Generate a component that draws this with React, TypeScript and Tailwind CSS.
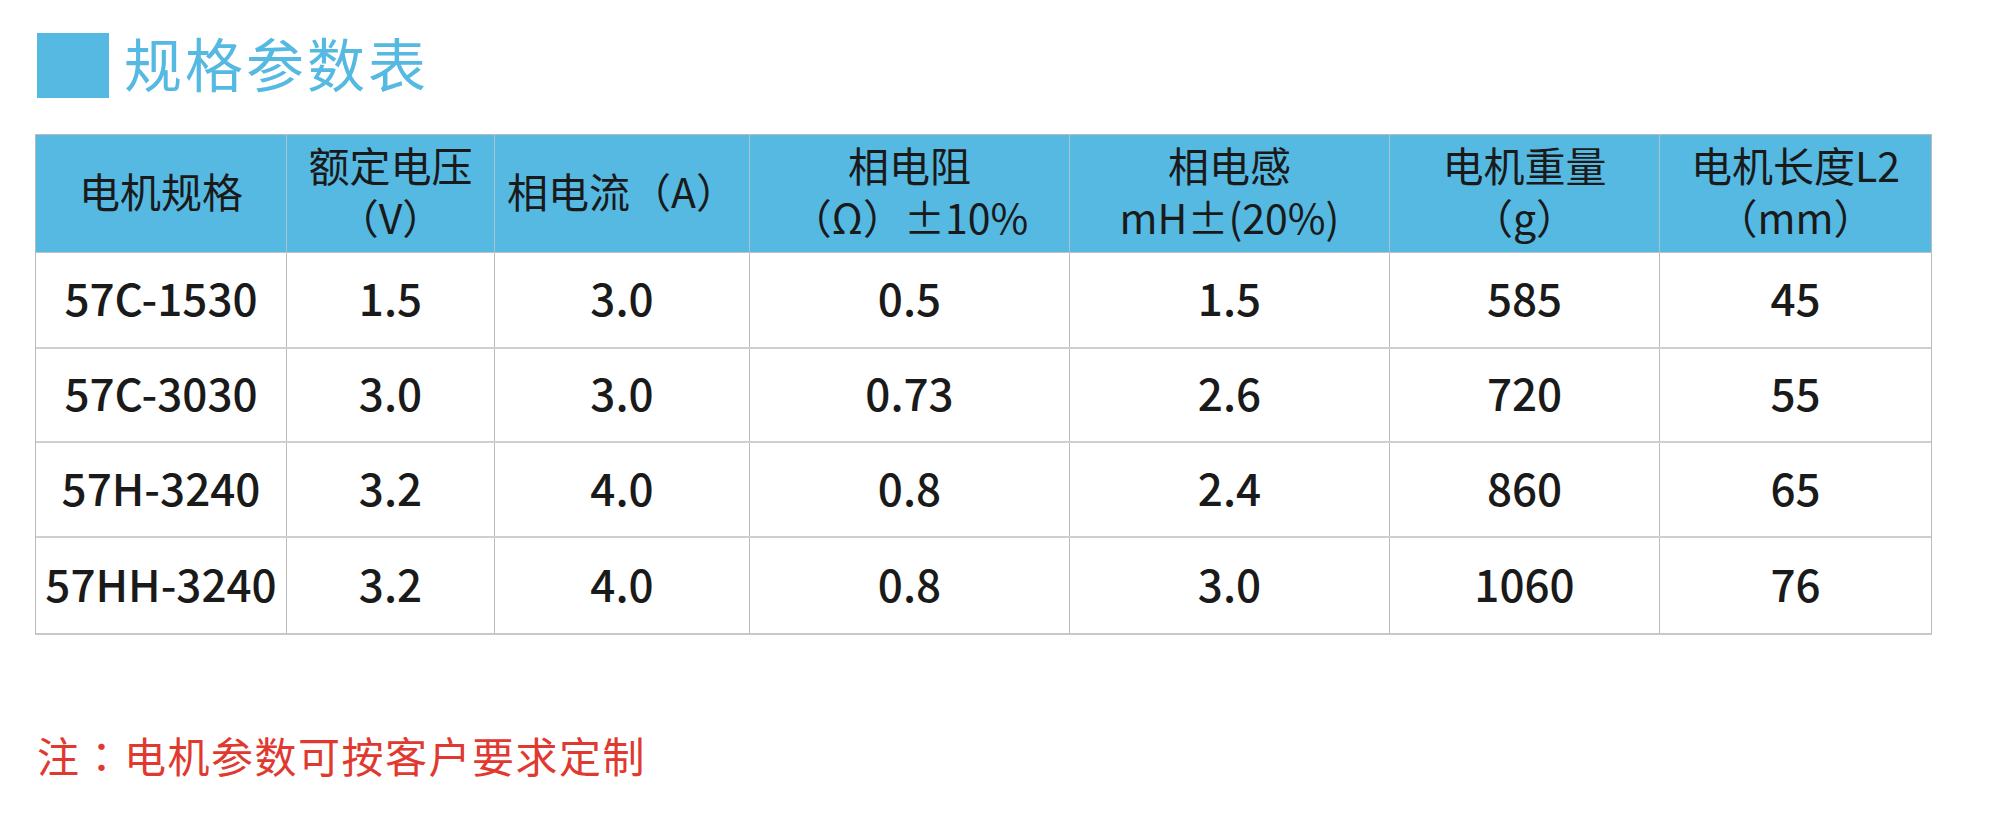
import React from "react";

const headers: string[][] = [
  ["电机规格"],
  ["额定电压", "（V）"],
  ["相电流（A）"],
  ["相电阻", "（Ω）±10%"],
  ["相电感", "mH±(20%)"],
  ["电机重量", "（g）"],
  ["电机长度L2", "（mm）"],
];

const rows: string[][] = [
  ["57C-1530", "1.5", "3.0", "0.5", "1.5", "585", "45"],
  ["57C-3030", "3.0", "3.0", "0.73", "2.6", "720", "55"],
  ["57H-3240", "3.2", "4.0", "0.8", "2.4", "860", "65"],
  ["57HH-3240", "3.2", "4.0", "0.8", "3.0", "1060", "76"],
];

const rowHeights = ["h-[96px]", "h-[94px]", "h-[95px]", "h-[95px]"];

export default function App() {
  return (
    <div className="w-[2000px] h-[820px] bg-white font-['Noto_Sans_CJK_SC','Noto_Sans',sans-serif] text-[#1a1a1a] overflow-hidden">
      <div className="pt-[33px] pl-[37px]">
        <div className="flex items-center h-[65px] gap-[15px]">
          <div className="w-[72px] h-[65px] bg-[#55b9e2]" />
          <div className="text-[58px] leading-[58px] tracking-[3px] mb-[7px] text-[#55b9e2] font-normal">规格参数表</div>
        </div>
      </div>

      <div className="ml-[35px] mt-[36px] w-[1897px] border border-[#bcbcbc] border-b-[2px] border-b-[#c8c8c8]">
        <div className="grid grid-cols-[251px_208px_255px_320px_320px_270px_271px] h-[118px] bg-[#55b9e2] border-b border-[#b9c3c8]">
          {headers.map((h, i) => (
            <div
              key={i}
              className={`flex flex-col items-center justify-center pb-[7px] text-center text-[41px] leading-[52px] font-normal ${i < 6 ? "border-r border-[#a9c3cf]" : ""}`}
            >
              {h.map((line, j) => (
                <div key={j} className="whitespace-nowrap">{line}</div>
              ))}
            </div>
          ))}
        </div>
        {rows.map((r, ri) => (
          <div
            key={ri}
            className={`grid grid-cols-[251px_208px_255px_320px_320px_270px_271px] ${rowHeights[ri]} ${ri < 3 ? "border-b-[2px] border-[#cfcfcf]" : ""}`}
          >
            {r.map((c, ci) => (
              <div
                key={ci}
                className={`flex items-center justify-center pb-[6px] text-[44px] leading-none font-medium whitespace-nowrap ${ci < 6 ? "border-r border-[#bcbcbc]" : ""}`}
              >
                {c}
              </div>
            ))}
          </div>
        ))}
      </div>

      <div className="pl-[37px] mt-[95px] text-[42px] leading-[50px] tracking-[1.5px] text-[#e0392f]">
        注<span className="font-['Noto_Sans_CJK_TC',sans-serif]">：</span>电机参数可按客户要求定制
      </div>
    </div>
  );
}
